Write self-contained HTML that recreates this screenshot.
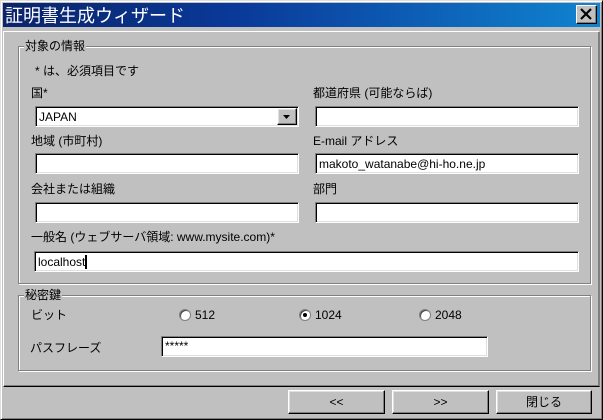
<!DOCTYPE html>
<html><head><meta charset="utf-8">
<style>
*{margin:0;padding:0;box-sizing:border-box}
body{width:603px;height:420px;background:#c0c0c0;position:relative;overflow:hidden;font-family:"Liberation Sans","Noto Sans CJK JP","IPAGothic",sans-serif;font-size:12px;color:#000}
.a{position:absolute}
.win{left:0;top:0;width:603px;height:420px;border-top:1px solid #dfdfdf;border-left:1px solid #dfdfdf;border-right:1px solid #000;border-bottom:1px solid #000;box-shadow:inset 1px 1px 0 #fff,inset -1px -1px 0 #808080}
.title{left:3px;top:3px;width:597px;height:24px;background:linear-gradient(90deg,#0a246a,#0a3a9a 40%,#1084d0);color:#fff;font-size:18px;line-height:24px;padding-left:2px;font-family:"Noto Sans CJK JP","IPAGothic",sans-serif}
.close{left:576px;top:5px;width:21px;height:19px;background:#c0c0c0;border-top:1px solid #fff;border-left:1px solid #fff;border-right:1px solid #000;border-bottom:1px solid #000;box-shadow:inset -1px -1px 0 #808080}
.panel{left:3px;top:31px;width:597px;height:356px;border-top:1px solid #fff;border-left:1px solid #fff;border-right:1px solid #808080;border-bottom:1px solid #000;box-shadow:inset -1px -1px 0 #808080}
.grp{border:1px solid #808080;box-shadow:1px 1px 0 #fff,inset 1px 1px 0 #fff}
.gl{background:#c0c0c0;padding:0 1px;line-height:13px}
.inp{background:#fff;border-top:1px solid #808080;border-left:1px solid #808080;border-right:1px solid #fff;border-bottom:1px solid #fff;box-shadow:inset 1px 1px 0 #000,inset -1px -1px 0 #dfdfdf;height:21px;padding:3px 0 0 3px;line-height:14px;white-space:nowrap}
.lbl{line-height:14px;white-space:nowrap}
.btn{background:#c0c0c0;border-top:1px solid #fff;border-left:1px solid #fff;border-right:1px solid #000;border-bottom:1px solid #000;box-shadow:inset -1px -1px 0 #808080,inset 1px 1px 0 #dfdfdf;height:24px;line-height:22px;text-align:center}
.rad{width:12px;height:12px;border-radius:50%;background:#fff;border:1px solid #808080;box-shadow:inset 1px 1px 0 #404040}
</style></head><body>
<div class="a win"></div>
<div class="a title">証明書生成ウィザード</div>
<div class="a close"><svg width="19" height="17" viewBox="0 0 19 17"><path d="M4 3L14 13M14 3L4 13" stroke="#000" stroke-width="2.2"/></svg></div>
<div class="a panel"></div>

<div class="a grp" style="left:18px;top:46px;width:573px;height:238px"></div>
<div class="a gl" style="left:24px;top:40px">対象の情報</div>
<div class="a lbl" style="left:35px;top:64px">* は、必須項目です</div>
<div class="a lbl" style="left:31px;top:86px">国*</div>
<div class="a lbl" style="left:313px;top:86px">都道府県 (可能ならば)</div>
<div class="a inp" style="left:35px;top:106px;width:264px">JAPAN</div>
<div class="a btn" style="left:277px;top:108px;width:20px;height:17px;line-height:15px"><svg width="10" height="6" viewBox="0 0 10 6" style="vertical-align:middle"><path d="M1 1H8L4.5 5Z" fill="#000"/></svg></div>
<div class="a inp" style="left:315px;top:106px;width:264px"></div>

<div class="a lbl" style="left:31px;top:134px">地域 (市町村)</div>
<div class="a lbl" style="left:313px;top:134px">E-mail アドレス</div>
<div class="a inp" style="left:35px;top:153px;width:264px"></div>
<div class="a inp" style="left:315px;top:153px;width:264px">makoto_watanabe@hi-ho.ne.jp</div>

<div class="a lbl" style="left:31px;top:182px">会社または組織</div>
<div class="a lbl" style="left:313px;top:182px">部門</div>
<div class="a inp" style="left:35px;top:202px;width:264px"></div>
<div class="a inp" style="left:315px;top:202px;width:264px"></div>

<div class="a lbl" style="left:31px;top:230px">一般名 (ウェブサーバ領域: www.mysite.com)*</div>
<div class="a inp" style="left:34px;top:251px;width:545px">localhost<span style="display:inline-block;width:2px;height:14px;background:#000;vertical-align:top"></span></div>

<div class="a grp" style="left:18px;top:295px;width:573px;height:76px"></div>
<div class="a gl" style="left:24px;top:289px">秘密鍵</div>
<div class="a lbl" style="left:31px;top:308px">ビット</div>
<div class="a rad" style="left:179px;top:309px"></div><div class="a lbl" style="left:195px;top:308px">512</div>
<div class="a rad" style="left:299px;top:309px"><div style="position:absolute;left:3px;top:3px;width:4px;height:4px;background:#000;border-radius:50%"></div></div><div class="a lbl" style="left:315px;top:308px">1024</div>
<div class="a rad" style="left:419px;top:309px"></div><div class="a lbl" style="left:435px;top:308px">2048</div>
<div class="a lbl" style="left:30px;top:341px">パスフレーズ</div>
<div class="a inp" style="left:161px;top:336px;width:327px;height:21px;padding-top:2px">*****</div>

<div class="a btn" style="left:288px;top:390px;width:97px">&lt;&lt;</div>
<div class="a btn" style="left:392px;top:390px;width:97px">&gt;&gt;</div>
<div class="a btn" style="left:496px;top:390px;width:96px">閉じる</div>
</body></html>
